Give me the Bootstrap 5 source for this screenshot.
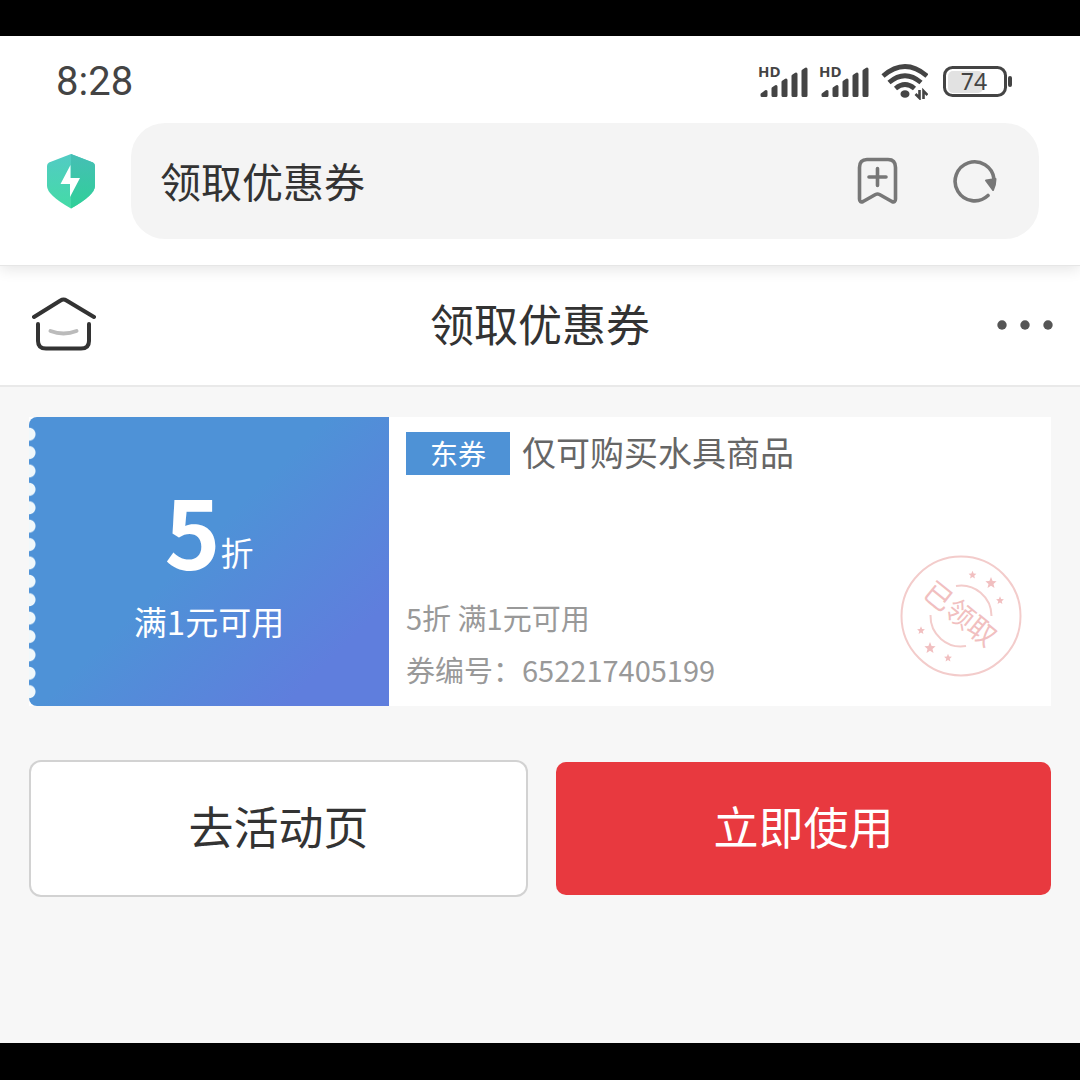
<!DOCTYPE html>
<html lang="zh-CN">
<head>
<meta charset="utf-8">
<meta name="viewport" content="width=device-width, initial-scale=1">
<title>领取优惠券</title>
<link rel="stylesheet" href="https://cdn.jsdelivr.net/npm/bootstrap@5.3.0/dist/css/bootstrap.min.css">
<style>
  body { background: #000; color: #333; font-family: "Noto Sans CJK SC", sans-serif; padding: 36px 0 37px; }
  svg { display: block; flex: none; }
  .screen { background: #f7f7f7; }
  .browser-top { padding-bottom: 26px; border-bottom: 1px solid #e6e6e6; box-shadow: 0 3px 14px rgba(0,0,0,.11); position: relative; z-index: 1; }
  .status-bar { height: 87px; padding: 4px 67px 0 56px; }
  .clock { font: 400 40px/1 Roboto, sans-serif; color: #444; }
  .status-icons { gap: 10px; }
  .battery { margin-left: 5px; }
  .address-row { padding: 0 41px 0 46px; gap: 35px; }
  .address-box { height: 116px; border-radius: 34px; background: #f4f4f4; padding: 0 42px 0 29px; }
  .address-box input { font-size: 41px; height: 60px; color: #333; min-width: 0; padding: 0; }
  .address-box input:focus { outline: 0; }
  .address-tools { gap: 55px; }
  .page-head { height: 121px; padding: 0 27px; border-bottom: 2px solid #e9e9e9; }
  .home-link { margin-left: 5px; }
  .page-title { font-size: 44px; line-height: 64px; font-weight: 400; padding-bottom: 6px; }
  .coupon { margin: 30px 29px 0; height: 289px; }
  .coupon-value { flex: 0 0 360px; padding: 70px 0 0; border-radius: 8px 0 0 8px; color: #fff; background: linear-gradient(135deg, #4e92d7 46%, #5f7edd 84%); position: relative; }
  .coupon-value::before { content: ""; position: absolute; left: 0; top: 8px; bottom: 5px; width: 8px; background: radial-gradient(circle 7px at 0 50%, #f0f8fb 6px, transparent 7px) 0 0 / 8px 18px; background-repeat: no-repeat round; }
  .discount { font-size: 33px; line-height: 84px; height: 110px; }
  .discount strong { font-size: 95px; line-height: 84px; font-weight: 700; vertical-align: -4px; }
  .condition { font-size: 33px; line-height: 48px; }
  .coupon-info { padding: 15px 17px 11px; }
  .kind { width: 104px; height: 43px; line-height: 43px; font-size: 28px; background: #4e92d6; }
  .scope { font-size: 34px; line-height: 40px; padding-bottom: 3px; color: #666; }
  .detail { font-size: 29px; line-height: 52px; color: #999; }
  .stamp { position: absolute; right: 28px; bottom: 28px; }
  .actions { padding: 56px 29px 0 31px; gap: 30px; }
  .actions .btn { flex: 1 1 0; height: 133px; padding: 0 0 6px; border: 0; border-radius: 10px; font-size: 45px; line-height: 64px; }
  .btn-visit, .btn-visit:hover { background: #fff; color: #333; box-shadow: 0 0 0 2px #d2d2d2; }
  .btn-use, .btn-use:hover { background: #e8393f; color: #fff; }
</style>
<script src="https://cdn.jsdelivr.net/npm/bootstrap@5.3.0/dist/js/bootstrap.bundle.min.js"></script>
</head>
<body class="min-vh-100 d-flex flex-column">
<svg width="0" height="0" class="position-absolute" aria-hidden="true">
  <defs>
    <g id="signal">
      <text x="0" y="12" font-family="Open Sans, sans-serif" font-weight="700" font-size="15" fill="#444">HD</text>
      <g fill="#444" stroke="#444" stroke-width="3" stroke-linejoin="round">
        <path d="M4 30.500v-1l4-3v4zM15 30.500v-7l3-2v9zM25 30.500V17l3-2v15.500zM35 30.500V11l3-2v21.500zM45 30.500V6l3-2v26.500z"/>
      </g>
    </g>
    <path id="star" d="M0-6 1.600-2 5.600-1.700 2.500.9 3.500 5 0 2.800-3.500 5-2.500.9-5.600-1.700-1.600-2z"/>
  </defs>
</svg>
<div class="screen flex-grow-1 d-flex flex-column">
  <header class="browser-top bg-white">
    <div class="status-bar d-flex align-items-center justify-content-between">
      <time class="clock">8:28</time>
      <div class="status-icons d-flex align-items-center">
        <svg width="51" height="34" aria-label="HD"><use href="#signal"/></svg>
        <svg width="51" height="34" aria-label="HD"><use href="#signal"/></svg>
        <svg width="48" height="36" viewBox="0 0 48 36" aria-label="Wi-Fi">
          <g fill="none" stroke="#444" stroke-width="4.800">
            <path d="M3 12Q25-7 47 12"/><path d="M9 18.500Q25 5 41 18.500"/><path d="M15.500 24.500Q25 16.500 34.500 24.500"/>
          </g>
          <ellipse cx="25" cy="30" rx="4.500" ry="3.800" fill="#444"/>
          <path d="M39.500 26v8l-4-4M43.500 35v-8l4 4" fill="none" stroke="#444" stroke-width="2.600"/>
        </svg>
        <svg class="battery" width="70" height="32" viewBox="0 0 70 32" aria-label="74%">
          <rect x="5" y="5" width="35" height="22" rx="5" fill="#e2e2e2"/>
          <rect x="1.500" y="1.500" width="61" height="28" rx="8" fill="none" stroke="#444" stroke-width="3"/>
          <path d="M67 12v7" stroke="#444" stroke-width="4" stroke-linecap="round"/>
          <text x="31" y="24" text-anchor="middle" font-family="Noto Sans, sans-serif" font-size="23" fill="#444">74</text>
        </svg>
      </div>
    </div>
    <div class="address-row d-flex align-items-center">
      <svg width="50" height="56" viewBox="0 0 50 56" aria-hidden="true">
        <defs><linearGradient id="mint" x2="0" y2="1"><stop stop-color="#52cbc4"/><stop offset="1" stop-color="#44dba6"/></linearGradient>
        <linearGradient id="mintDark" x2="0" y2="1"><stop stop-color="#46beb5"/><stop offset="1" stop-color="#2fd098"/></linearGradient></defs>
        <path d="M25 1 47 9.500Q49 10.500 49 13v20Q49 42 25 55.500 1 42 1 33V13Q1 10.500 3 9.500z" fill="url(#mint)"/>
        <path d="M25 1 47 9.500Q49 10.500 49 13v20Q49 42 25 55.500z" fill="url(#mintDark)"/>
        <path d="M24.500 12 14.500 31H24v13L34 25H24.500z" fill="#fff"/>
      </svg>
      <div class="address-box flex-grow-1 d-flex align-items-center">
        <input class="flex-grow-1 border-0 bg-transparent" type="text" value="领取优惠券" aria-label="地址栏">
        <div class="address-tools d-flex">
          <button class="btn p-0 border-0" type="button" aria-label="添加书签">
            <svg width="41" height="48" viewBox="0 0 41 48" fill="none" stroke="#777" stroke-width="3.600" stroke-linecap="round" stroke-linejoin="round"><path d="M10 2.500h21q7.500 0 7.500 8V42q0 4-3.600 2.500L22.500 37.500q-2-1-4 0L6.100 44.500Q2.500 46 2.500 42V10.500q0-8 7.500-8zM20.500 11.500v17M12 20h17"/></svg>
          </button>
          <button class="btn p-0 border-0" type="button" aria-label="刷新">
            <svg width="44" height="48" viewBox="0 0 44 48"><path d="M35 38.500A19.500 19.500 0 1 1 41 22" fill="none" stroke="#777" stroke-width="3.600" stroke-linecap="round"/><path d="M33 23.500 42.500 22Q42.500 28 40 33z" fill="#777" stroke="#777" stroke-width="2" stroke-linejoin="round"/></svg>
          </button>
        </div>
      </div>
    </div>
  </header>
  <nav class="page-head bg-white d-flex align-items-center" aria-label="页面">
    <div class="col">
      <a href="#" class="home-link d-inline-block" aria-label="首页">
        <svg width="64" height="56" viewBox="0 0 64 56" fill="none" stroke="#333" stroke-width="4" stroke-linecap="round"><path d="M2 22 28.500 5.500Q31.500 3.500 34.500 5.500L62 22"/><path d="M6 29v17q0 7.500 8 7.500h35q8 0 8-7.500V29"/><path d="M18.500 36Q31.500 41 44.500 36" stroke="#bbb"/></svg>
      </a>
    </div>
    <h1 class="page-title m-0">领取优惠券</h1>
    <div class="col d-flex justify-content-end">
      <button class="btn p-0 border-0" type="button" aria-label="更多">
        <svg width="56" height="12" viewBox="0 0 56 12" fill="#555"><circle cx="5" cy="5" r="4.700"/><circle cx="28" cy="5" r="4.700"/><circle cx="51" cy="5" r="4.700"/></svg>
      </button>
    </div>
  </nav>
  <main>
    <section class="coupon bg-white d-flex">
      <div class="coupon-value text-center">
        <div class="discount"><strong>5</strong>折</div>
        <div class="condition">满1元可用</div>
      </div>
      <div class="coupon-info flex-grow-1 d-flex flex-column justify-content-between position-relative">
        <div class="d-flex align-items-center">
          <span class="kind text-white text-center me-2">东券</span>
          <span class="scope ms-1">仅可购买水具商品</span>
        </div>
        <div class="detail">
          <div>5折 满1元可用</div>
          <div>券编号：652217405199</div>
        </div>
        <svg class="stamp" width="124" height="124" viewBox="-62 -62 124 124" fill="none" stroke="#f3cccb" stroke-width="2">
          <circle r="59.500"/>
          <path d="M-5-30A30.500 30.500 0 0 1 30.500 0M-30.500-1A30.500 30.500 0 0 0 5 30"/>
          <g fill="#f1bfc0" stroke="none">
            <use href="#star" transform="translate(11.500 -41) scale(.7)"/><use href="#star" transform="translate(30 -33)"/><use href="#star" transform="translate(39 -15.500) scale(.7)"/>
            <use href="#star" transform="translate(-40 14.500) scale(.7)"/><use href="#star" transform="translate(-31 32)"/><use href="#star" transform="translate(-13 42) scale(.7)"/>
            <text transform="rotate(39)" text-anchor="middle" x="-2" y="9" font-family="Noto Sans CJK SC, sans-serif" font-size="28">已领取</text>
          </g>
        </svg>
      </div>
    </section>
    <div class="actions d-flex">
      <button type="button" class="btn btn-visit">去活动页</button>
      <button type="button" class="btn btn-use">立即使用</button>
    </div>
  </main>
</div>
</body>
</html>
